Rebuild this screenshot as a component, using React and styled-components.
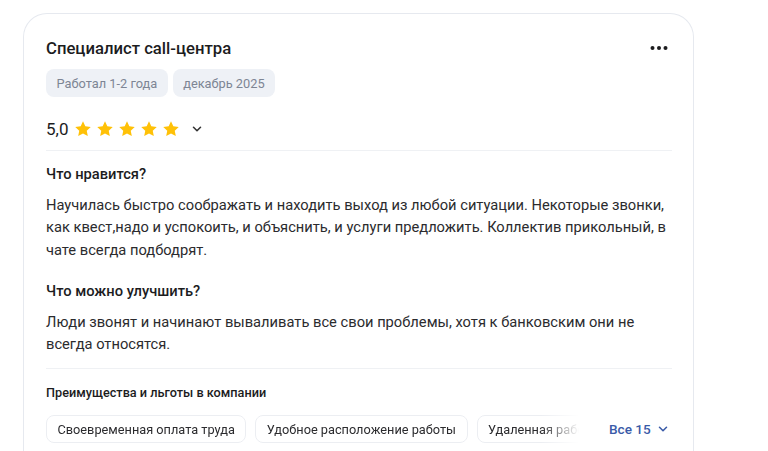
import React from "react";
import styled, { createGlobalStyle } from "styled-components";

const Global = createGlobalStyle`
  html, body { margin: 0; padding: 0; background: #fff; }
  body { font-family: Roboto, "Noto Sans", Arial, sans-serif; color: #222; }
`;

const Page = styled.div`
  padding: 13px 0 0 23px;
  height: 451px;
  box-sizing: border-box;
  overflow: hidden;
`;

const Card = styled.div`
  width: 671px;
  box-sizing: border-box;
  border: 1px solid #e6e9ef;
  border-bottom: none;
  border-radius: 24px 24px 0 0;
  padding: 21px 21px 40px 22px;
  background: #fff;
`;

const Header = styled.div`
  display: flex;
  align-items: center;
  justify-content: space-between;
  height: 26px;
`;

const Title = styled.h2`
  margin: 0;
  font-size: 16.7px;
  font-weight: 500;
  color: #1c1c1e;
`;

const MoreButton = styled.button`
  border: none;
  background: none;
  padding: 0;
  margin-right: 4px;
  display: flex;
  align-items: center;
  cursor: pointer;
`;

const Tags = styled.div`
  display: flex;
  gap: 5px;
  margin-top: 8px;
`;

const Tag = styled.span`
  display: inline-flex;
  align-items: center;
  height: 28px;
  padding: 0 10.5px;
  border-radius: 8px;
  background: #eef1f6;
  color: #7d8594;
  font-size: 12.8px;
`;

const RatingRow = styled.div`
  display: flex;
  align-items: center;
  height: 30px;
  margin-top: 17px;
  padding-bottom: 6px;
  border-bottom: 1px solid #eff1f4;
`;

const Score = styled.span`
  font-size: 17px;
  color: #1c1c1e;
  margin-right: 6px;
`;

const Stars = styled.div`
  display: flex;
  gap: 4px;
  margin-right: 10px;
`;

const Section = styled.div`
  margin-top: ${(p) => p.$top}px;
`;

const SectionTitle = styled.h3`
  margin: 0;
  font-size: 14.7px;
  font-weight: 500;
  color: #1c1c1e;
  line-height: 20px;
`;

const Text = styled.p`
  margin: 10px 0 0;
  font-size: 14.7px;
  line-height: 22.3px;
  color: #2b2b2e;
`;

const Divider = styled.div`
  height: 1px;
  background: #eff1f4;
  margin-top: 13px;
`;

const BenefitsTitle = styled.h4`
  margin: 16px 0 0;
  font-size: 12.7px;
  font-weight: 500;
  color: #1c1c1e;
  line-height: 16px;
`;

const BenefitsRow = styled.div`
  display: flex;
  align-items: center;
  margin-top: 14px;
`;

const Chips = styled.div`
  flex: 0 0 533px;
  display: flex;
  gap: 9px;
  overflow: hidden;
  -webkit-mask-image: linear-gradient(to right, #000 495px, transparent 533px);
  mask-image: linear-gradient(to right, #000 495px, transparent 533px);
`;

const Chip = styled.span`
  flex: none;
  display: inline-flex;
  align-items: center;
  height: 28px;
  box-sizing: border-box;
  padding: 0 10.5px;
  border: 1px solid #eceef2;
  border-radius: 8px;
  font-size: 12.75px;
  color: #2b2b2e;
  white-space: nowrap;
`;

const AllLink = styled.button`
  flex: none;
  margin-left: 30px;
  border: none;
  background: none;
  padding: 0;
  display: flex;
  align-items: center;
  gap: 5px;
  font-family: inherit;
  font-size: 13.6px;
  font-weight: 500;
  color: #3a5ba8;
  white-space: nowrap;
  cursor: pointer;
`;

const Star = () => (
  <svg width="18" height="18" viewBox="0 0 24 24">
    <path
      d="M12 1.8l3.1 6.6 7.2.9-5.3 5 1.4 7.1L12 17.9l-6.4 3.5L7 14.3l-5.3-5 7.2-.9z"
      fill="#ffc107"
    />
  </svg>
);

const Chevron = ({ color = "#333", size = 14 }) => (
  <svg width={size} height={size} viewBox="0 0 16 16" fill="none">
    <path d="M4 6l4 4 4-4" stroke={color} strokeWidth="1.8" strokeLinecap="round" strokeLinejoin="round" />
  </svg>
);

const Dots = () => (
  <svg width="18" height="6" viewBox="0 0 18 6">
    <circle cx="2.5" cy="3" r="2" fill="#1c1c1e" />
    <circle cx="9" cy="3" r="2" fill="#1c1c1e" />
    <circle cx="15.5" cy="3" r="2" fill="#1c1c1e" />
  </svg>
);

const benefits = [
  "Своевременная оплата труда",
  "Удобное расположение работы",
  "Удаленная работа",
];

export default function App() {
  return (
    <Page>
      <Global />
      <Card>
        <Header>
          <Title>Специалист call-центра</Title>
          <MoreButton>
            <Dots />
          </MoreButton>
        </Header>
        <Tags>
          <Tag>Работал 1-2 года</Tag>
          <Tag>декабрь 2025</Tag>
        </Tags>
        <RatingRow>
          <Score>5,0</Score>
          <Stars>
            {[0, 1, 2, 3, 4].map((i) => (
              <Star key={i} />
            ))}
          </Stars>
          <Chevron />
        </RatingRow>
        <Section $top={13}>
          <SectionTitle>Что нравится?</SectionTitle>
          <Text>
            Научилась быстро соображать и находить выход из любой ситуации. Некоторые звонки,
            как квест,надо и успокоить, и объяснить, и услуги предложить. Коллектив прикольный, в
            чате всегда подбодрят.
          </Text>
        </Section>
        <Section $top={20}>
          <SectionTitle>Что можно улучшить?</SectionTitle>
          <Text>
            Люди звонят и начинают вываливать все свои проблемы, хотя к банковским они не
            всегда относятся.
          </Text>
        </Section>
        <Divider />
        <BenefitsTitle>Преимущества и льготы в компании</BenefitsTitle>
        <BenefitsRow>
          <Chips>
            {benefits.map((b) => (
              <Chip key={b}>{b}</Chip>
            ))}
          </Chips>
          <AllLink>
            Все 15
            <Chevron color="#3a5ba8" size={14} />
          </AllLink>
        </BenefitsRow>
      </Card>
    </Page>
  );
}
